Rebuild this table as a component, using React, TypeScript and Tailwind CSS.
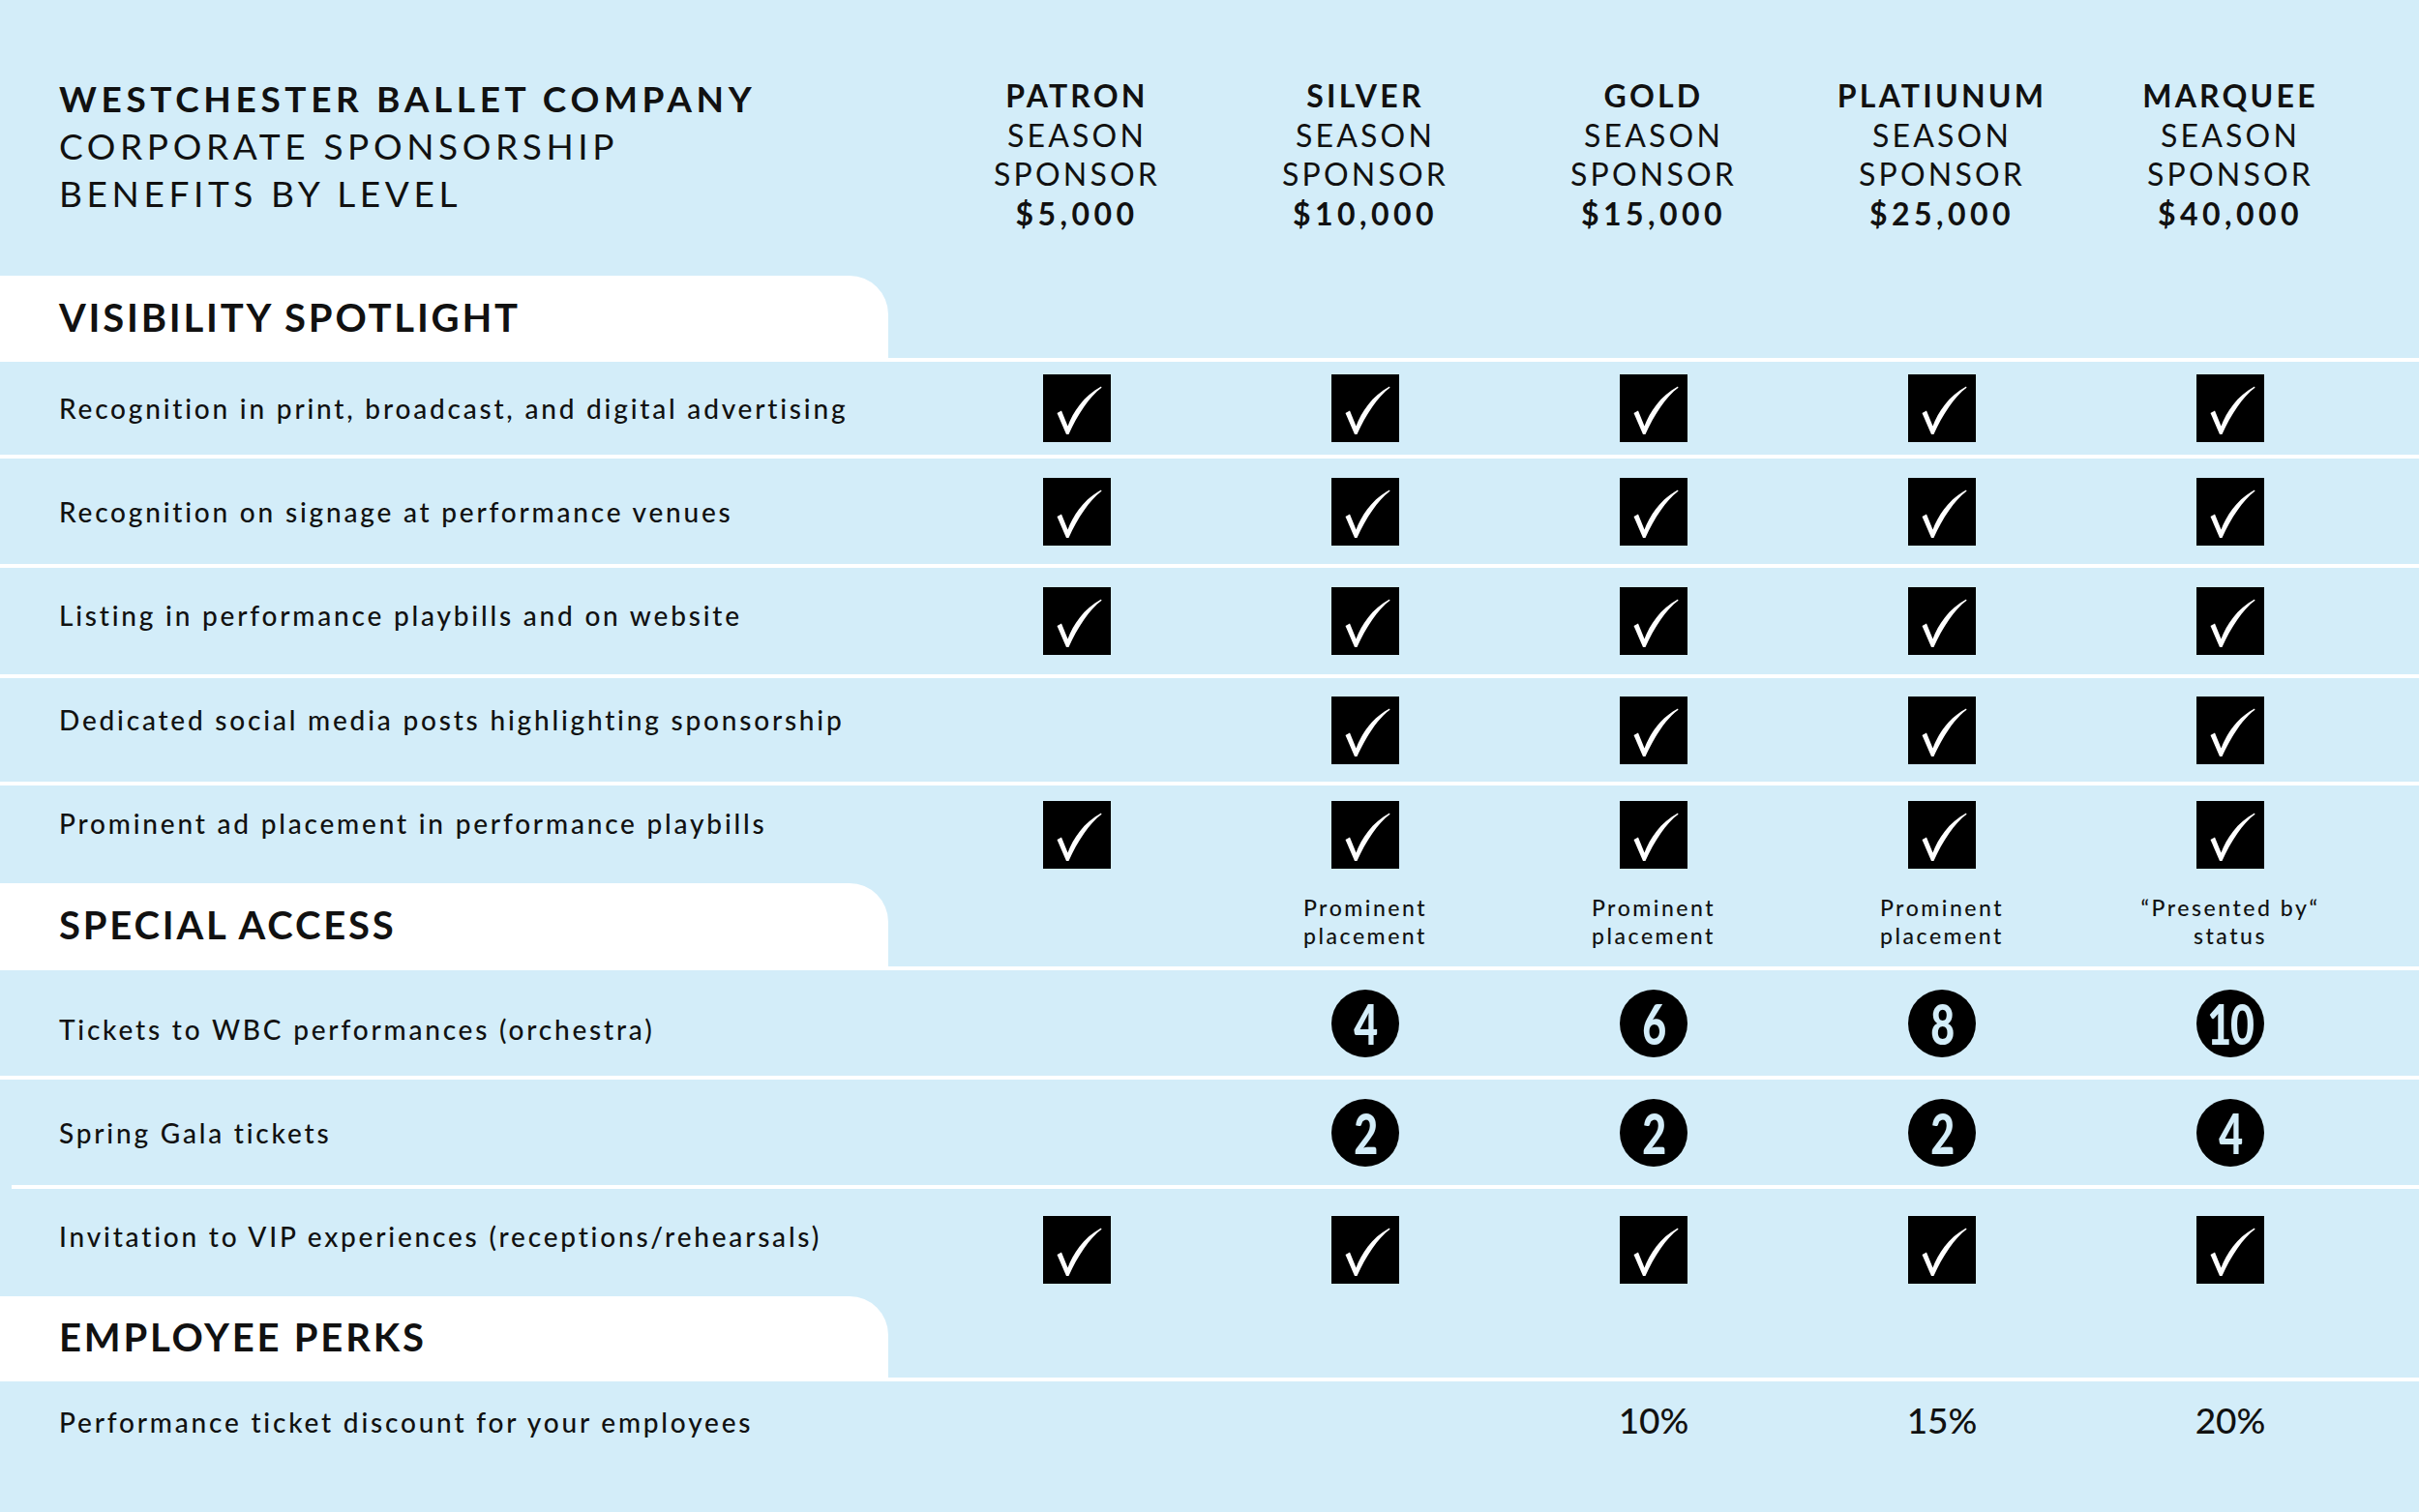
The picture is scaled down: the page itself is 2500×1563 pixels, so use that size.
import React from "react";

const COLS = "grid grid-cols-[964px_repeat(5,298px)]";

type Cell = "x" | "" | number | string;

interface RowSpec {
  label: string;
  cells: Cell[];
  h: string;
  line?: "full" | "indent" | "none";
  top?: boolean;
  labelClass?: string;
  cellClass?: string;
}

const levels = [
  { name: "PATRON", amount: "$5,000" },
  { name: "SILVER", amount: "$10,000" },
  { name: "GOLD", amount: "$15,000" },
  { name: "PLATIUNUM", amount: "$25,000" },
  { name: "MARQUEE", amount: "$40,000" },
];

const visibility: RowSpec[] = [
  { label: "Recognition in print, broadcast, and digital advertising", cells: ["x", "x", "x", "x", "x"], h: "h-[96px]" },
  { label: "Recognition on signage at performance venues", cells: ["x", "x", "x", "x", "x"], h: "h-[109px]" },
  { label: "Listing in performance playbills and on website", cells: ["x", "x", "x", "x", "x"], h: "h-[110px]", labelClass: "pb-[12px]" },
  { label: "Dedicated social media posts highlighting sponsorship", cells: ["", "x", "x", "x", "x"], h: "h-[107px]", labelClass: "pb-[22px]" },
  { label: "Prominent ad placement in performance playbills", cells: ["x", "x", "x", "x", "x"], h: "h-[101px]", line: "none", labelClass: "pb-[24px]" },
];

const access: RowSpec[] = [
  { label: "Tickets to WBC performances (orchestra)", cells: ["", 4, 6, 8, 10], h: "h-[109px]", labelClass: "pt-[12px]" },
  { label: "Spring Gala tickets", cells: ["", 2, 2, 2, 4], h: "h-[109px]", line: "indent" },
  { label: "Invitation to VIP experiences (receptions/rehearsals)", cells: ["x", "x", "x", "x", "x"], h: "h-[111px]", line: "none", labelClass: "pb-[14px]", cellClass: "pt-[14px]" },
];

const perks: RowSpec[] = [
  { label: "Performance ticket discount for your employees", cells: ["", "", "10%", "15%", "20%"], h: "h-[135px]", line: "none", top: true },
];

function CheckBox() {
  return (
    <div className="w-[70px] h-[70px] bg-black">
      <svg viewBox="0 0 70 70" className="w-full h-full">
        <path
          d="M14.5 40 L19 37.5 L25.5 53.5 C31 39 42 22 60 12.5 L60.5 13.8 C48 23 36 41 26.5 62 L24 62 Z"
          fill="#fff"
        />
      </svg>
    </div>
  );
}

function Count({ n }: { n: number }) {
  return (
    <div className="w-[70px] h-[70px] rounded-full bg-black flex items-center justify-center text-[#d3edf9] text-[58px] font-black leading-none">
      <span className="inline-block scale-x-[0.74] tracking-[-0.03em]">{n}</span>
    </div>
  );
}

function CellView({ value }: { value: Cell }) {
  if (value === "x") return <CheckBox />;
  if (typeof value === "number") return <Count n={value} />;
  if (value) return <span className="text-[37px] leading-none font-medium">{value}</span>;
  return null;
}

function Row({ row }: { row: RowSpec }) {
  const line = row.line ?? "full";
  return (
    <>
      <div className={`${COLS} ${row.h} ${row.top ? "items-start pt-[21px]" : "items-center"}`}>
        <div className={`pl-[61px] text-[28px] font-medium tracking-[0.1em] text-[#111] whitespace-nowrap ${row.labelClass ?? ""}`}>
          {row.label}
        </div>
        {row.cells.map((c, i) => (
          <div key={i} className={`flex justify-center ${row.cellClass ?? ""}`}>
            <CellView value={c} />
          </div>
        ))}
      </div>
      {line === "full" && <div className="h-[4px] bg-white" />}
      {line === "indent" && <div className="h-[4px] bg-white ml-[12px]" />}
    </>
  );
}

function SectionTab({ title, h, notes }: { title: string; h: string; notes?: string[][] }) {
  return (
    <>
      <div className={`${COLS} ${h}`}>
        <div className="bg-white w-[918px] rounded-tr-[40px] flex items-center pl-[61px]">
          <h2 className="text-[40px] font-bold tracking-[0.07em] text-[#111]">{title}</h2>
        </div>
        {notes &&
          notes.map((n, i) => (
            <div key={i} className="flex flex-col items-center justify-center pb-[6px] text-[23px] leading-[29px] font-medium tracking-[0.11em] text-[#111]">
              {n.map((l) => (
                <span key={l}>{l}</span>
              ))}
            </div>
          ))}
      </div>
      <div className="h-[4px] bg-white" />
    </>
  );
}

export default function App() {
  return (
    <div className="w-full min-h-screen bg-[#d3edf9] font-['Lato','Noto_Sans',sans-serif] text-[#111]">
      {/* header */}
      <div className={`${COLS} h-[285px]`}>
        <div className="pl-[61px] pt-[77px] text-[37px] leading-[49px] tracking-[0.125em] whitespace-nowrap">
          <div className="font-bold">WESTCHESTER BALLET COMPANY</div>
          <div>CORPORATE SPONSORSHIP</div>
          <div>BENEFITS BY LEVEL</div>
        </div>
        {levels.map((l) => (
          <div key={l.name} className="pt-[79px] text-center text-[32px] leading-[40.5px] tracking-[0.1em]">
            <div className="font-bold">{l.name}</div>
            <div>SEASON</div>
            <div>SPONSOR</div>
            <div className="font-bold tracking-[0.14em]">{l.amount}</div>
          </div>
        ))}
      </div>

      <SectionTab title="VISIBILITY SPOTLIGHT" h="h-[85px]" />
      {visibility.map((r) => (
        <Row key={r.label} row={r} />
      ))}

      <SectionTab
        title="SPECIAL ACCESS"
        h="h-[86px]"
        notes={[[""], ["Prominent", "placement"], ["Prominent", "placement"], ["Prominent", "placement"], ["\u201CPresented by\u201C", "status"]]}
      />
      {access.map((r) => (
        <Row key={r.label} row={r} />
      ))}

      <SectionTab title="EMPLOYEE PERKS" h="h-[84px]" />
      {perks.map((r) => (
        <Row key={r.label} row={r} />
      ))}
    </div>
  );
}
